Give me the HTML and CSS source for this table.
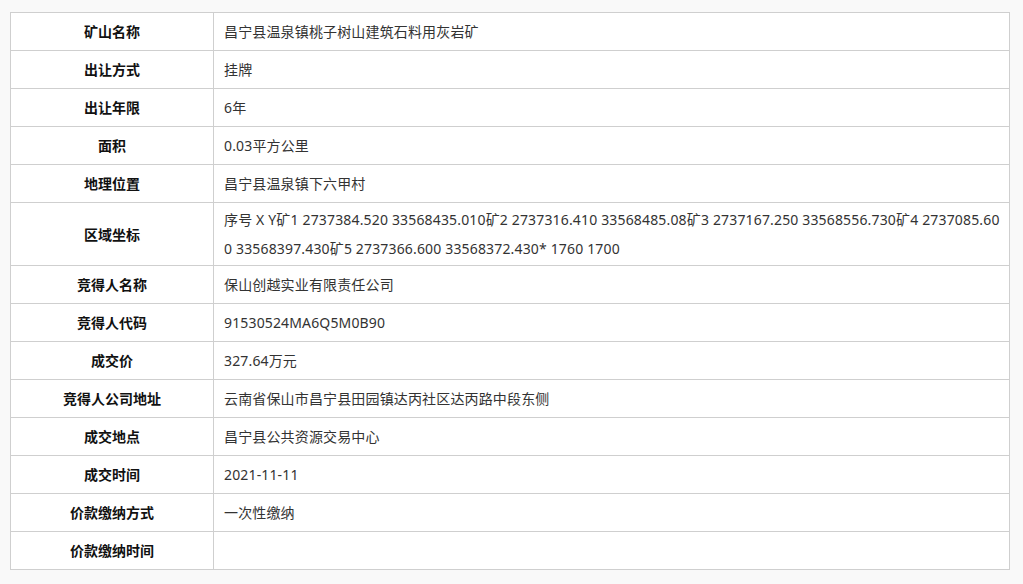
FILE: index.html
```html
<!DOCTYPE html>
<html lang="zh-CN">
<head>
  <meta charset="UTF-8" />
  <title>矿业权出让结果</title>
  <link rel="stylesheet" href="styles.css">
</head>
<body>
  <table class="info-table">
    <tr><th>矿山名称</th><td>昌宁县温泉镇桃子树山建筑石料用灰岩矿</td></tr>
    <tr><th>出让方式</th><td>挂牌</td></tr>
    <tr><th>出让年限</th><td>6年</td></tr>
    <tr><th>面积</th><td>0.03平方公里</td></tr>
    <tr><th>地理位置</th><td>昌宁县温泉镇下六甲村</td></tr>
    <tr class="multi"><th>区域坐标</th><td>序号 X Y矿1 2737384.520 33568435.010矿2 2737316.410 33568485.08矿3 2737167.250 33568556.730矿4 2737085.600 33568397.430矿5 2737366.600 33568372.430* 1760 1700</td></tr>
    <tr><th>竞得人名称</th><td>保山创越实业有限责任公司</td></tr>
    <tr><th>竞得人代码</th><td>91530524MA6Q5M0B90</td></tr>
    <tr><th>成交价</th><td>327.64万元</td></tr>
    <tr><th>竞得人公司地址</th><td>云南省保山市昌宁县田园镇达丙社区达丙路中段东侧</td></tr>
    <tr><th>成交地点</th><td>昌宁县公共资源交易中心</td></tr>
    <tr><th>成交时间</th><td>2021-11-11</td></tr>
    <tr><th>价款缴纳方式</th><td>一次性缴纳</td></tr>
    <tr><th>价款缴纳时间</th><td></td></tr>
  </table>
</body>
</html>
```

FILE: styles.css
```css
body {
  margin: 12px 10px;
  background-color: #f9f9f9;
  font-family: "Noto Sans", "Noto Sans CJK SC", sans-serif;
  font-size: 14px;
  color: #333;
}
.info-table {
  width: 1000px;
  border-collapse: collapse;
  background: #fff;
  table-layout: fixed;
}
.info-table th,
.info-table td {
  border: 1px solid #cfcfcf;
  height: 29px;
  padding: 4px 10px;
  line-height: 29px;
}
.info-table th {
  width: 182px;
  text-align: center;
  font-weight: bold;
  color: #111;
}
.info-table td {
  padding-right: 6px;
  text-align: left;
  letter-spacing: 0.15px;
  word-break: break-all;
}
.info-table .multi th,
.info-table .multi td {
  padding-top: 2px;
  padding-bottom: 2px;
}
.info-table .multi td {
  letter-spacing: 0.16px;
}
```
